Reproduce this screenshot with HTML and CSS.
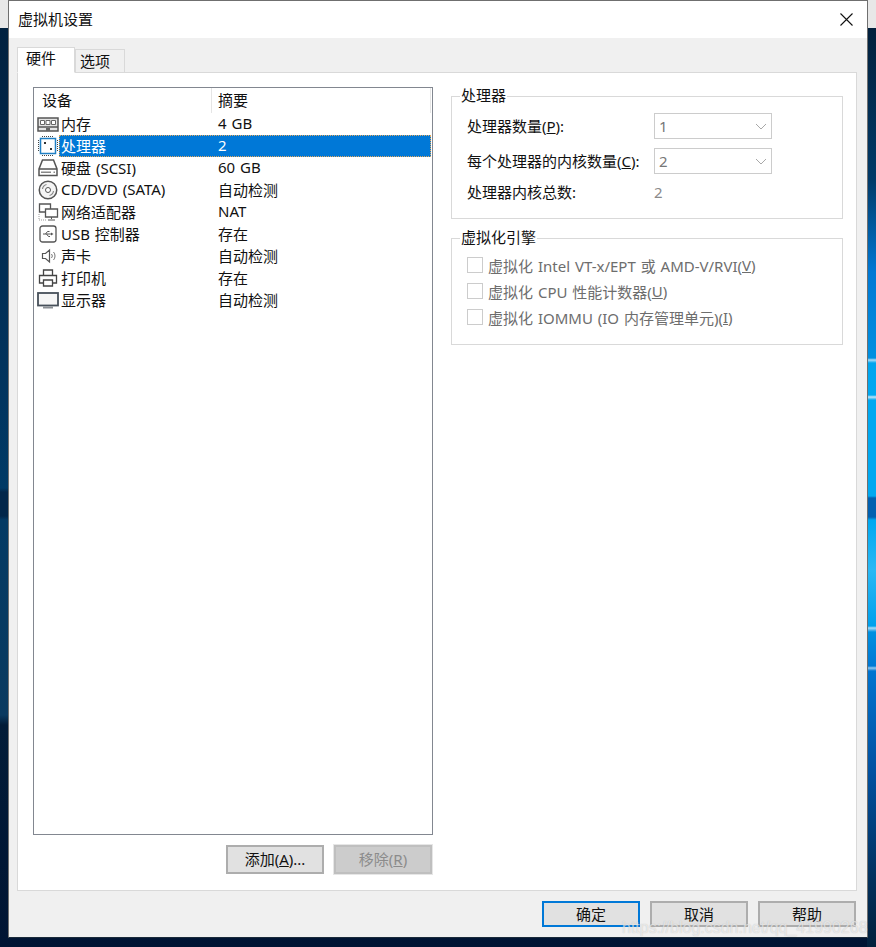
FILE: index.html
```html
<!DOCTYPE html>
<html lang="zh">
<head>
<meta charset="utf-8">
<title>虚拟机设置</title>
<link rel="stylesheet" href="styles.css">
</head>
<body>
<div class="window">
  <header class="titlebar">
    <span class="title">虚拟机设置</span>
    <svg class="close" width="13" height="13" viewBox="0 0 13 13"><path d="M.5 .5L12.500 12.500M12.500 .5L.5 12.500" stroke="#111" stroke-width="1.100" fill="none"/></svg>
  </header>
  <div class="body">
    <div class="tabs">
      <div class="tab active">硬件</div>
      <div class="tab">选项</div>
    </div>
    <div class="panel">
      <div class="left">
        <div class="list">
          <div class="list-head"><div class="col-a">设备</div><div class="col-b">摘要</div></div>
          <div class="row"><span class="ico"><svg width="22" height="15" viewBox="0 0 22 15"><path d="M1 1h20v9h-20zM1 10v4h20v-4" fill="#e4e4e4" stroke="#555" stroke-width="1.500"/><path d="M3.500 3.500h4v4h-4zM9 3.500h4v4h-4zM14.500 3.500h4v4h-4z" fill="#fff" stroke="#666"/><path d="M9 11h4v3h-4z" fill="#666"/></svg></span><div class="cells"><span class="name">内存</span><span class="sum">4 GB</span></div></div>
          <div class="row selected"><span class="ico"><svg width="20" height="20" viewBox="0 0 20 20"><rect x="2.500" y="2.500" width="15" height="15" fill="#fff" stroke="#1f7fc4" stroke-width="1.500"/><path d="M4 .5h12M4 19.500h12M.5 4v12M19.500 4v12" stroke="#444" stroke-dasharray="1 1" fill="none"/><rect x="6" y="6" width="2" height="2" fill="#333"/><rect x="12" y="12" width="2" height="2" fill="#333"/></svg></span><div class="cells"><span class="name">处理器</span><span class="sum">2</span></div></div>
          <div class="row"><span class="ico"><svg width="20" height="18" viewBox="0 0 20 18"><path d="M4.500 1h11L19 10v6.500H1V10zM1 10h18" fill="#fff" stroke="#555" stroke-width="1.500"/><path d="M3 12.500h10v1.500H3zM15.500 12.500h1.500v1.500h-1.500z" fill="#888"/></svg></span><div class="cells"><span class="name">硬盘 (SCSI)</span><span class="sum">60 GB</span></div></div>
          <div class="row"><span class="ico"><svg width="20" height="20" viewBox="0 0 20 20"><circle cx="10" cy="10" r="8.750" fill="#f4f4f4" stroke="#555" stroke-width="1.500"/><circle cx="10" cy="10" r="2.500" fill="#fff" stroke="#555"/><path d="M4.500 9a5.500 5.500 0 0 1 4-4.500M15.500 11a5.500 5.500 0 0 1-4 4.500" fill="none" stroke="#888" stroke-width="1.200"/></svg></span><div class="cells"><span class="name">CD/DVD (SATA)</span><span class="sum">自动检测</span></div></div>
          <div class="row"><span class="ico"><svg width="21" height="18" viewBox="0 0 21 18"><path d="M1.500 1h11v8h-11z" fill="#fff" stroke="#555" stroke-width="1.300"/><path d="M7.500 6h12v8h-12z" fill="#fff" stroke="#555" stroke-width="1.300"/><path d="M13.500 14v2M10 17h7" stroke="#555" fill="none"/><path d="M1 11v6h7" stroke="#999" stroke-dasharray="1 1" fill="none"/></svg></span><div class="cells"><span class="name">网络适配器</span><span class="sum">NAT</span></div></div>
          <div class="row"><span class="ico ico-left"><svg width="18" height="18" viewBox="0 0 18 18"><rect x="1" y="1" width="16" height="16" rx="2.500" fill="#fff" stroke="#555" stroke-width="1.300"/><path d="M4 9h8M6.500 9l2-2.500h2M7.500 9l2 2.500h1.500" fill="none" stroke="#555"/><path d="M12 7.500l2.500 1.500-2.500 1.500z" fill="#555"/></svg></span><div class="cells"><span class="name">USB 控制器</span><span class="sum">存在</span></div></div>
          <div class="row"><span class="ico ico-left"><svg width="18" height="16" viewBox="0 0 18 16"><path d="M3.500 5.500h3l4-3.500v12l-4-3.500h-3z" fill="#fff" stroke="#555" stroke-width="1.200"/><path d="M12.500 6a3 3 0 0 1 0 4M14.500 4a6 6 0 0 1 0 8" fill="none" stroke="#777"/></svg></span><div class="cells"><span class="name">声卡</span><span class="sum">自动检测</span></div></div>
          <div class="row"><span class="ico"><svg width="20" height="18" viewBox="0 0 20 18"><path d="M5.500 6V1h9v5" fill="#fff" stroke="#444" stroke-width="1.300"/><path d="M5 14H1.500V6.500h17V14H15" fill="#fff" stroke="#444" stroke-width="1.300"/><path d="M5.500 11h9v6h-9z" fill="#fff" stroke="#444" stroke-width="1.300"/></svg></span><div class="cells"><span class="name">打印机</span><span class="sum">存在</span></div></div>
          <div class="row"><span class="ico"><svg width="22" height="17" viewBox="0 0 22 17"><rect x="1" y="1" width="20" height="12.500" fill="#f6f6f6" stroke="#47505a" stroke-width="1.800"/><path d="M6 14.500h10v2H6z" fill="#8a8f94"/></svg></span><div class="cells"><span class="name">显示器</span><span class="sum">自动检测</span></div></div>
        </div>
        <div class="list-actions">
          <button class="btn">添加(<u>A</u>)...</button>
          <button class="btn disabled">移除(<u>R</u>)</button>
        </div>
      </div>
      <div class="right">
        <fieldset class="group group-cpu">
          <legend>处理器</legend>
          <div class="field"><label>处理器数量(<u>P</u>):</label><div class="combo"><span>1</span><svg width="12" height="7" viewBox="0 0 12 7"><path d="M1 1l5 5 5-5" fill="none" stroke="#a8a8a8"/></svg></div></div>
          <div class="field"><label>每个处理器的内核数量(<u>C</u>):</label><div class="combo"><span>2</span><svg width="12" height="7" viewBox="0 0 12 7"><path d="M1 1l5 5 5-5" fill="none" stroke="#a8a8a8"/></svg></div></div>
          <div class="field total"><label>处理器内核总数:</label><span class="value">2</span></div>
        </fieldset>
        <fieldset class="group group-virt">
          <legend>虚拟化引擎</legend>
          <div class="check"><span class="box"></span>虚拟化 Intel VT-x/EPT 或 AMD-V/RVI(<u>V</u>)</div>
          <div class="check"><span class="box"></span>虚拟化 CPU 性能计数器(<u>U</u>)</div>
          <div class="check"><span class="box"></span>虚拟化 IOMMU (IO 内存管理单元)(<u>I</u>)</div>
        </fieldset>
      </div>
    </div>
    <div class="footer">
      <button class="btn primary">确定</button>
      <button class="btn">取消</button>
      <button class="btn">帮助</button>
    </div>
  </div>
</div>
<div class="watermark">https://blog.csdn.net/qq_41990268</div>
</body>
</html>
```
FILE: styles.css
```css
* { box-sizing: border-box; }
html, body { margin: 0; height: 947px; overflow: hidden; }
body {
  position: relative;
  font-family: "Noto Sans", "Noto Sans CJK SC", sans-serif;
  font-size: 15px;
  word-spacing: 1px;
  color: #111;
  background:
    linear-gradient(#e8e8e8 0 28px, transparent 28px) no-repeat,
    linear-gradient(to bottom, #02203c 28px, #013a68 180px, #0078d4 272px, #0090e0 358px, #a8dcf8 360px, #00a4ee 363px, #00a8f0 395px, #c0e6fa 397px, #00a8f0 400px, #00a8f0 496px, #0060b0 498px, #0060b0 517px, #00a8f0 520px, #2ab8f4 570px, #00a0ec 626px, #a8dcf8 628px, #0090e0 632px, #0078d4 666px, #90c8f0 668px, #0074d0 671px, #0050a0 773px, #02305c 880px, #02203c 947px) no-repeat right / 9px 100%,
    linear-gradient(to bottom, #01213f 28px, #013560 400px, #003a66 488px, #02264a 492px, #02264a 516px, #043a64 520px, #0a3a60 715px, #021c38 725px, #001433 947px);
  background-repeat: no-repeat;
}
.window {
  margin-left: 8px;
  width: 860px;
  height: 938px;
  background: #f0f0f0;
  border: 1px solid #6f6f6f;
  border-bottom-color: #1a2a3a;
  display: flex;
  flex-direction: column;
}
.titlebar {
  height: 37px;
  flex: none;
  background: #fff;
  display: flex;
  align-items: center;
  justify-content: space-between;
  padding: 0 14px 0 9px;
}
.title { color: #111; word-spacing: 0; padding-bottom: 2px; }
.close { display: block; }
.body { flex: 1; padding: 9px 10px 0 8px; display: flex; flex-direction: column; }
.tabs { display: flex; align-items: flex-start; height: 26px; margin-bottom: -1px; position: relative; z-index: 1; }
.tab {
  height: 23px;
  width: 50px;
  margin-top: 2px;
  padding-left: 4px;
  background: #f0f0f0;
  border: 1px solid #d9d9d9;
  border-bottom: 0;
  line-height: 22px;
}
.tab.active {
  height: 26px;
  width: 58px;
  margin-top: 0;
  padding-left: 8px;
  background: #fff;
  border-bottom: 1px solid #fff;
  line-height: 20px;
}
.panel {
  width: 840px;
  height: 819px;
  background: #fff;
  border: 1px solid #d9d9d9;
  padding: 14px 13px 0 15px;
  display: flex;
  gap: 18px;
}
.left { width: 400px; flex: none; }
.list {
  height: 748px;
  border: 1px solid #828790;
  background: #fff;
  padding: 0 1px;
}
.list-head { display: flex; height: 25px; line-height: 24px; }
.col-a { width: 177px; padding-left: 7px; border-right: 1px solid #e5e5e5; }
.col-b { flex: 1; padding-left: 6px; border-right: 1px solid #e5e5e5; }
.row { display: flex; align-items: center; height: 22px; white-space: nowrap; }
.ico { width: 22px; margin-left: 2px; flex: none; display: flex; align-items: center; justify-content: center; }
.ico-left { justify-content: flex-start; padding-left: 2px; }
.ico svg { display: block; flex: none; }
.cells { flex: 1; display: flex; align-items: center; height: 22px; position: relative; }
.name { width: 154px; padding-left: 2px; padding-bottom: 2px; flex: none; }
.sum { flex: 1; padding-left: 5px; padding-bottom: 2px; }
.row.selected .cells { background: #0078d7; color: #fff; outline: 1px dotted #e0a860; outline-offset: -1px; }
.list-actions { display: flex; justify-content: flex-end; gap: 10px; margin-top: 10px; padding-right: 1px; }
.list-actions .btn { padding-bottom: 2px; }
.btn {
  width: 98px;
  height: 29px;
  font: inherit;
  line-height: 16px;
  color: #111;
  background: #e1e1e1;
  border: 2px solid #adadad;
  padding: 0;
}
.btn.disabled { background: #cccccc; border-color: #bfbfbf; color: #8b8b8b; outline: 1px solid #e6e6e6; }
.right { width: 392px; flex: none; padding-top: 1px; }
.group {
  margin: 0;
  padding: 0 0 0 15px;
  border: 1px solid #d9d9d9;
  min-width: 0;
}
.group legend { margin-left: -7px; padding: 0 1px 2px; line-height: 14px; }
.group-cpu { height: 131px; }
.group-virt { height: 115px; margin-top: 11px; }
.field { display: flex; align-items: center; height: 26px; margin-bottom: 9px; }
.field:first-of-type { margin-top: 9px; }
.field label { width: 187px; flex: none; padding-bottom: 2px; }
.combo {
  width: 118px;
  height: 26px;
  border: 1px solid #cccccc;
  display: flex;
  align-items: center;
  justify-content: space-between;
  padding: 0 4px 0 4px;
  color: #777;
  background: #fff;
}
.total { height: 18px; margin-top: 0; }
.value { color: #8a8a8a; }
.check { display: flex; align-items: center; height: 16px; margin-bottom: 10px; color: #6d6d6d; white-space: pre; }
.check:first-of-type { margin-top: 11px; }
.box { width: 16px; height: 16px; border: 1px solid #cccccc; background: #fff; margin-right: 5px; flex: none; }
.footer { display: flex; justify-content: flex-end; gap: 10px; margin-top: 10px; padding-right: 1px; }
.footer .btn { height: 26px; }
.btn.primary { border-color: #0078d7; }
.watermark {
  position: absolute;
  left: 622px;
  top: 920px;
  font-family: "Liberation Sans", sans-serif;
  font-size: 16px;
  line-height: 15px;
  word-spacing: 0;
  color: rgba(255,255,255,.6);
  text-shadow: 0 0 1px rgba(110,110,110,.4);
  white-space: nowrap;
}
```
